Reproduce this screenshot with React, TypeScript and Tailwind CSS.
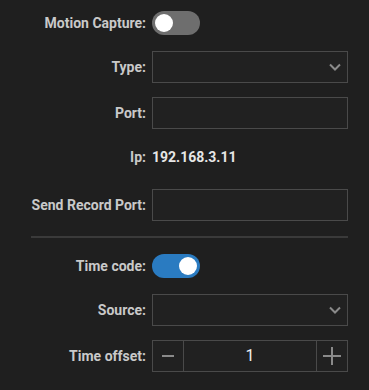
import React, { useState } from "react";

const font = { fontFamily: "Roboto, 'Liberation Sans', sans-serif" };

function Toggle({ on, onChange }: { on: boolean; onChange: () => void }) {
  return (
    <button
      onClick={onChange}
      className={`relative w-[48px] h-[24px] rounded-full ${on ? "bg-[#2a7bc1]" : "bg-[#6e6e6e]"}`}
    >
      <span
        className={`absolute top-[3px] w-[18px] h-[18px] rounded-full bg-white ${on ? "left-[27px]" : "left-[3px]"}`}
      />
    </button>
  );
}

function Row({ label, children, className = "" }: { label: string; children: React.ReactNode; className?: string }) {
  return (
    <div className={`flex items-center h-[32px] ${className}`}>
      <div className="w-[115px] text-right text-[14px] font-bold text-[#c9c9c9] whitespace-nowrap">{label}</div>
      <div className="ml-[6px] flex-1 flex items-center h-full">{children}</div>
    </div>
  );
}

function Chevron() {
  return (
    <svg width="14" height="14" viewBox="0 0 14 14" className="text-[#8a8a8a]">
      <path d="M2 4.5 L7 9.5 L12 4.5" fill="none" stroke="currentColor" strokeWidth="2" />
    </svg>
  );
}

function Select() {
  return (
    <div className="w-full h-[32px] border border-[#4a4a4a] bg-[#212121] flex items-center justify-end pr-[5px]">
      <Chevron />
    </div>
  );
}

function Input() {
  return <input className="w-full h-[32px] border border-[#4a4a4a] bg-[#212121] outline-none text-white px-2 text-[14px]" />;
}

export default function App() {
  const [mocap, setMocap] = useState(false);
  const [tc, setTc] = useState(true);
  const [offset, setOffset] = useState(1);

  return (
    <div className="w-[369px] h-[390px] bg-[#1f1f1f] pl-[31px] pr-[21px] pt-[7px]" style={font}>
      <Row label="Motion Capture:">
        <Toggle on={mocap} onChange={() => setMocap(!mocap)} />
      </Row>
      <Row label="Type:" className="mt-[12px]">
        <Select />
      </Row>
      <Row label="Port:" className="mt-[14px]">
        <Input />
      </Row>
      <Row label="Ip:" className="mt-[12px]">
        <span className="text-[14px] font-bold text-[#e6e6e6]">192.168.3.11</span>
      </Row>
      <Row label="Send Record Port:" className="mt-[16px]">
        <Input />
      </Row>
      <div className="mt-[15px] h-[2px] bg-[#3a3a3a]" />
      <Row label="Time code:" className="mt-[12px]">
        <Toggle on={tc} onChange={() => setTc(!tc)} />
      </Row>
      <Row label="Source:" className="mt-[12px]">
        <Select />
      </Row>
      <Row label="Time offset:" className="mt-[14px]">
        <div className="w-full h-[32px] border border-[#4a4a4a] bg-[#212121] flex">
          <button
            onClick={() => setOffset(offset - 1)}
            className="w-[31px] h-full border-r border-[#4a4a4a] flex items-center justify-center"
          >
            <svg width="14" height="14" viewBox="0 0 14 14">
              <path d="M1 7 H13" stroke="#8a8a8a" strokeWidth="2" />
            </svg>
          </button>
          <div className="flex-1 flex items-center justify-center text-[16px] text-[#f0f0f0]">{offset}</div>
          <button
            onClick={() => setOffset(offset + 1)}
            className="w-[31px] h-full border-l border-[#4a4a4a] flex items-center justify-center"
          >
            <svg width="18" height="18" viewBox="0 0 18 18">
              <path d="M0 9 H18 M9 0 V18" stroke="#8a8a8a" strokeWidth="2" />
            </svg>
          </button>
        </div>
      </Row>
    </div>
  );
}
